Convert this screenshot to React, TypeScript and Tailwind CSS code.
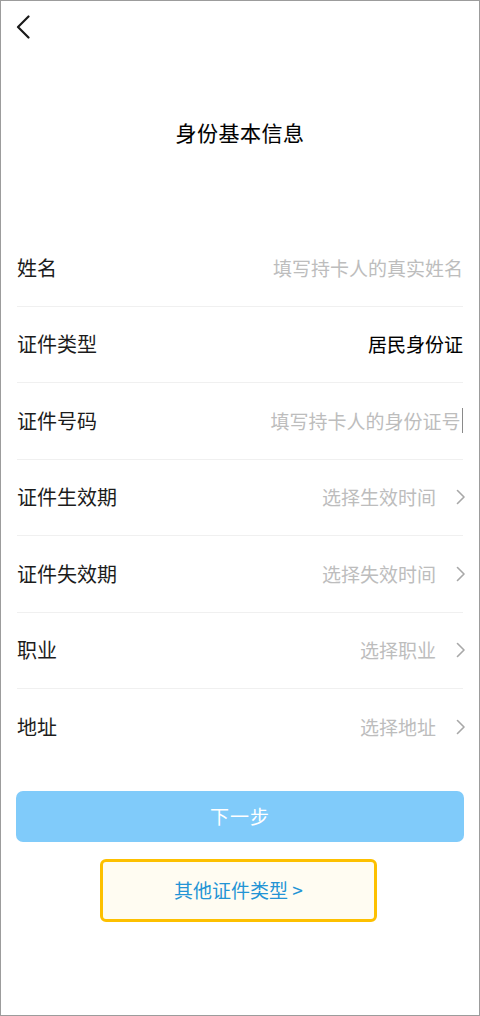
import React from 'react';

type Row = {
    label: string;
    value: string;
    filled?: boolean;
    arrow?: boolean;
    cursor?: boolean;
};

const rows: Row[] = [
    { label: '姓名', value: '填写持卡人的真实姓名' },
    { label: '证件类型', value: '居民身份证', filled: true },
    { label: '证件号码', value: '填写持卡人的身份证号', cursor: true },
    { label: '证件生效期', value: '选择生效时间', arrow: true },
    { label: '证件失效期', value: '选择失效时间', arrow: true },
    { label: '职业', value: '选择职业', arrow: true },
    { label: '地址', value: '选择地址', arrow: true },
];

const Chevron: React.FC = () => (
    <svg width="9" height="16" viewBox="0 0 9 16" fill="none" className="ml-[20px] -mr-[2px] shrink-0">
        <path d="M1.5 1.5 L8 8 L1.5 14.5" stroke="#a8a8a8" strokeWidth="1.6" strokeLinecap="round" strokeLinejoin="round" />
    </svg>
);

const App: React.FC = () => {
    return (
        <div
            className="w-[480px] h-[1016px] bg-white border border-[#9c9c9c] overflow-hidden"
            style={{ fontFamily: '"Noto Sans CJK SC", "Noto Sans", sans-serif' }}
        >
            {/* Back button */}
            <div className="pt-[14px] pl-[14px] h-[38px]">
                <svg width="16" height="24" viewBox="0 0 16 24" fill="none">
                    <path d="M13.5 1.5 L3 12 L13.5 22.5" stroke="#1a1a1a" strokeWidth="2.2" strokeLinecap="round" strokeLinejoin="round" />
                </svg>
            </div>

            {/* Title */}
            <h1 className="mt-[78px] text-center text-[21px] leading-[30px] font-normal text-[#000] tracking-[0.5px] [-webkit-text-stroke:0.12px_#000]">
                身份基本信息
            </h1>

            {/* Form rows */}
            <div className="mt-[83px] px-[16px]">
                {rows.map((row, i) => (
                    <div
                        key={row.label}
                        className={
                            'h-[76.5px] flex items-center justify-between ' +
                            (i < rows.length - 1 ? 'border-b border-[#f0f0f0]' : '')
                        }
                    >
                        <span className="text-[20px] text-[#1c1c1c]">{row.label}</span>
                        <div className="flex items-center">
                            <span
                                className={
                                    row.filled
                                        ? 'text-[19px] text-[#000] [-webkit-text-stroke:0.1px_#000]'
                                        : 'text-[19px] text-[#bdbdbd]'
                                }
                            >
                                {row.value}
                            </span>
                            {row.cursor && <span className="w-[1.5px] h-[25px] bg-[#8a8a8a] ml-[1px]" />}
                            {row.arrow && <Chevron />}
                        </div>
                    </div>
                ))}
            </div>

            {/* Next button */}
            <div className="mt-[25px] px-[15px]">
                <button className="w-full h-[51px] rounded-[7px] bg-[#80cbfa] text-white text-[19px] tracking-[1px]">
                    下一步
                </button>
            </div>

            {/* Other documents */}
            <div className="mt-[17px] ml-[99px] w-[277px] h-[63px] rounded-[6px] border-[3px] border-[#fdc000] bg-[#fffcf2] flex items-center justify-center">
                <span className="text-[19px] text-[#2394d5]">其他证件类型 &gt;</span>
            </div>
        </div>
    );
};

export default App;
